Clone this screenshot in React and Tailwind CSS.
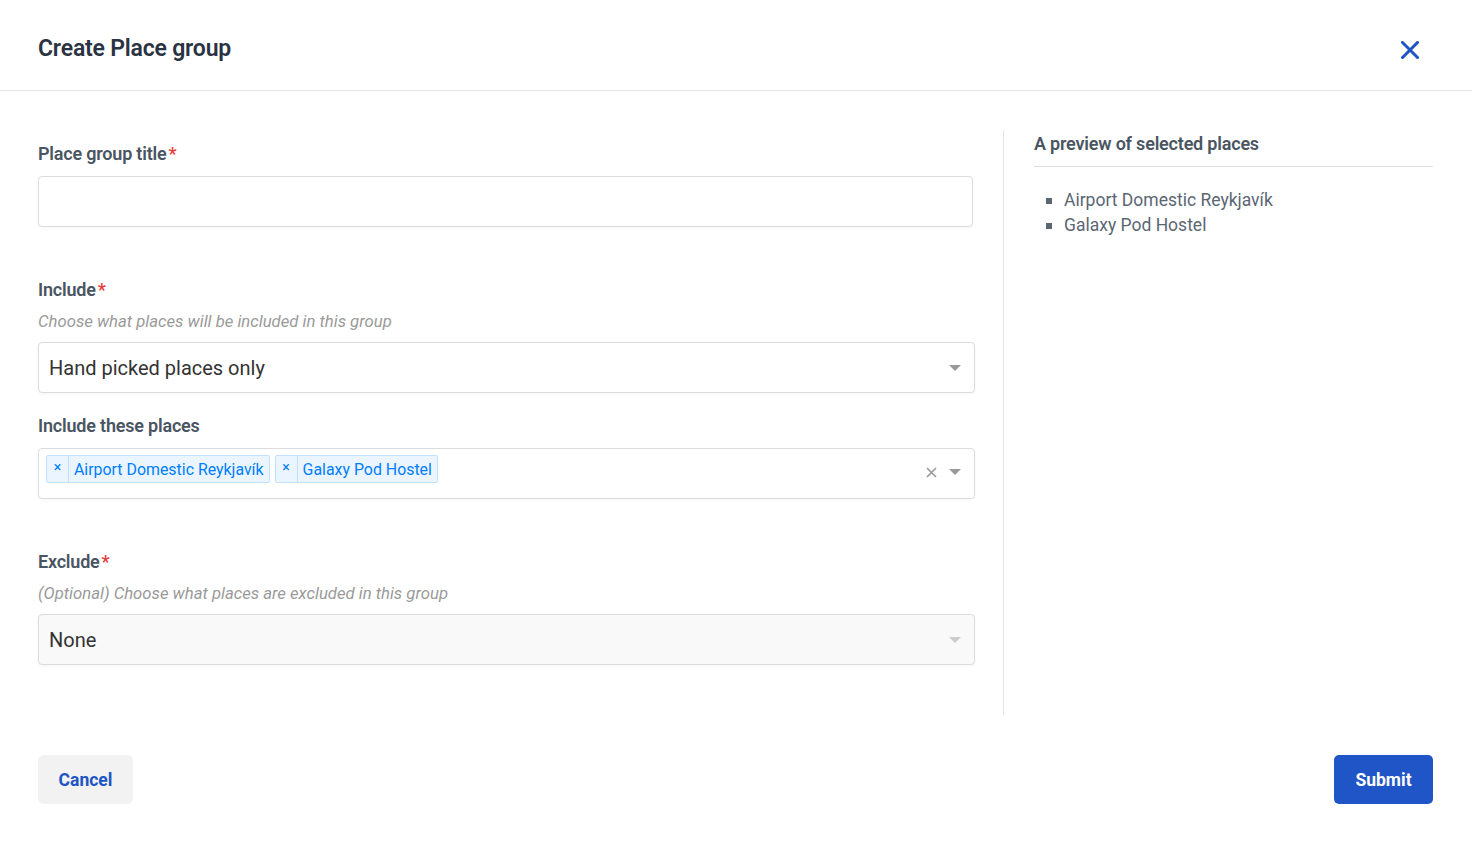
import React from "react";

function Caret({ light }) {
  return (
    <span
      className={`inline-block w-0 h-0 border-l-[6px] border-r-[6px] border-t-[6px] border-l-transparent border-r-transparent ${light ? "border-t-[#cccccc]" : "border-t-[#999999]"}`}
    />
  );
}

function Label({ children, required }) {
  return (
    <div className="pt-[2px] text-[18px] leading-[22px] font-semibold text-[#4a5562] tracking-[-0.2px]">
      {children}
      {required && <span className="text-[#e53e3e] ml-[2px]">*</span>}
    </div>
  );
}

function Tag({ children }) {
  return (
    <div className="flex h-[28px] items-stretch rounded-[2px] border border-[#c2e0ff] bg-[#ebf5ff] text-[#007eff] text-[15.9px]">
      <span className="flex w-[22px] items-center justify-center border-r border-[#c2e0ff] text-[14px] pb-[4px]">×</span>
      <span className="flex items-center px-[5px] pt-[1px]">{children}</span>
    </div>
  );
}

export default function App() {
  return (
    <div className="min-h-[842px] w-[1472px] bg-white font-['Roboto',sans-serif]">
      <div className="flex h-[91px] items-center justify-between border-b border-[#e2e2e2] pl-[38px] pr-[53px] pt-[9px]">
        <h1 className="text-[23px] font-semibold text-[#2a3342] tracking-[-0.2px]">Create Place group</h1>
        <svg width="18" height="18" viewBox="0 0 18 18">
          <path d="M1.5 1.5 L16.5 16.5 M16.5 1.5 L1.5 16.5" stroke="#1f54c4" strokeWidth="3" strokeLinecap="square" />
        </svg>
      </div>

      <div className="flex px-[38px] pt-[40px]">
        <div className="w-[937px] pt-[10px] pb-[50px]">
          <Label required>Place group title</Label>
          <div className="mt-[11px] h-[51px] w-[935px] rounded-[4px] border border-[#dcdcdc] bg-white shadow-[0_1px_3px_rgba(0,0,0,0.04)]" />

          <div className="mt-[50px]">
            <Label required>Include</Label>
            <div className="mt-[10px] text-[16.7px] italic leading-[22px] text-[#9a9a9a]">Choose what places will be included in this group</div>
            <div className="mt-[9px] flex h-[51px] items-center justify-between rounded-[4px] border border-[#dcdcdc] bg-white pl-[10px] pr-[13px] shadow-[0_1px_3px_rgba(0,0,0,0.04)]">
              <span className="text-[20px] text-[#333333]">Hand picked places only</span>
              <Caret />
            </div>
          </div>

          <div className="mt-[20px]">
            <Label>Include these places</Label>
            <div className="mt-[11px] flex h-[51px] items-start justify-between rounded-[4px] border border-[#dcdcdc] bg-white pl-[7px] pr-[13px] pt-[6px] shadow-[0_1px_3px_rgba(0,0,0,0.04)]">
              <div className="flex gap-[5px]">
                <Tag>Airport Domestic Reykjavík</Tag>
                <Tag>Galaxy Pod Hostel</Tag>
              </div>
              <div className="flex h-[34px] items-center gap-[12px]">
                <svg width="11" height="11" viewBox="0 0 11 11">
                  <path d="M1 1 L10 10 M10 1 L1 10" stroke="#999999" strokeWidth="1.6" />
                </svg>
                <Caret />
              </div>
            </div>
          </div>

          <div className="mt-[50px]">
            <Label required>Exclude</Label>
            <div className="mt-[10px] text-[16.7px] italic leading-[22px] text-[#9a9a9a]">(Optional) Choose what places are excluded in this group</div>
            <div className="mt-[9px] flex h-[51px] items-center justify-between rounded-[4px] border border-[#dcdcdc] bg-[#f9f9f9] pl-[10px] pr-[13px] shadow-[0_1px_3px_rgba(0,0,0,0.04)]">
              <span className="text-[20px] text-[#333333]">None</span>
              <Caret light />
            </div>
          </div>
        </div>

        <div className="ml-[28px] h-[584px] w-px bg-[#e2e2e2]" />

        <div className="ml-[30px] w-[399px]">
          <div className="border-b border-[#dedede] pt-[2px] pb-[11px] text-[18px] leading-[22px] font-semibold text-[#4a5562] tracking-[-0.2px]">
            A preview of selected places
          </div>
          <ul className="mt-[21px] pl-[12px] text-[17.5px] leading-[25px] text-[#5b6673]">
            <li className="flex items-center gap-[12px]"><span className="inline-block h-[6px] w-[6px] bg-[#5b6673]" />Airport Domestic Reykjavík</li>
            <li className="flex items-center gap-[12px]"><span className="inline-block h-[6px] w-[6px] bg-[#5b6673]" />Galaxy Pod Hostel</li>
          </ul>
        </div>
      </div>

      <div className="mt-[40px] flex justify-between pl-[38px] pr-[39px]">
        <button className="h-[49px] w-[95px] rounded-[6px] bg-[#f2f2f2] pt-[2px] text-[17.5px] font-bold text-[#1f54c4]">Cancel</button>
        <button className="h-[49px] w-[99px] rounded-[5px] bg-[#1f55c7] pt-[2px] text-[17.5px] font-bold text-white">Submit</button>
      </div>
    </div>
  );
}
